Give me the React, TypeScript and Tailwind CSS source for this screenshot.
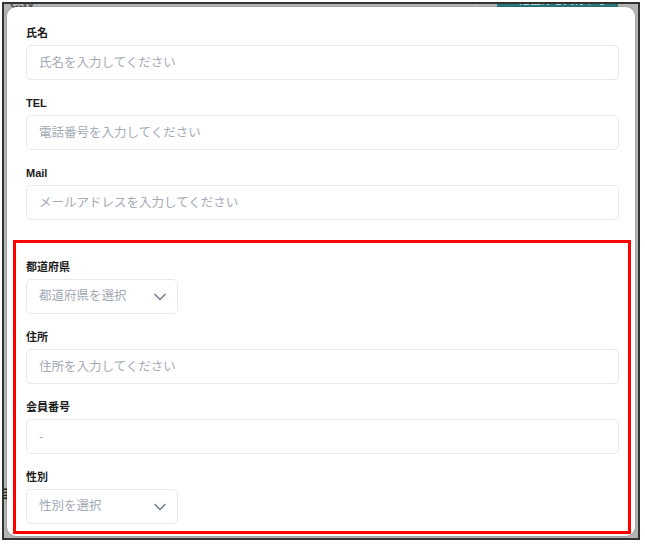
import React from "react";
import { ChevronDown } from "lucide-react";

const font = {
  fontFamily: '"Liberation Sans", "Noto Sans CJK JP", sans-serif',
};

function Label({ children }: { children: React.ReactNode }) {
  return (
    <label className="block text-[11px] leading-[16px] font-bold text-[#1c1c1c] mb-1">
      {children}
    </label>
  );
}

function TextField({
  label,
  placeholder,
  className = "",
}: {
  label: string;
  placeholder: string;
  className?: string;
}) {
  return (
    <div className={className}>
      <Label>{label}</Label>
      <input
        type="text"
        placeholder={placeholder}
        className="block w-full h-[35px] px-3 rounded-[5px] border border-[#e7e8eb] bg-white text-[12.5px] text-[#333] placeholder:text-[#a3aab6] outline-none"
      />
    </div>
  );
}

function SelectField({
  label,
  placeholder,
  className = "",
}: {
  label: string;
  placeholder: string;
  className?: string;
}) {
  return (
    <div className={className}>
      <Label>{label}</Label>
      <div className="flex items-center justify-between w-[152px] h-[35px] pl-3 pr-[7px] rounded-[5px] border border-[#e7e8eb] bg-white">
        <span className="text-[12.5px] text-[#a3aab6]">{placeholder}</span>
        <ChevronDown size={20} strokeWidth={2} className="text-[#7b8391]" />
      </div>
    </div>
  );
}

export default function App() {
  return (
    <div className="w-[645px] h-[544px] bg-white pt-[2px] pl-[2px]" style={font}>
      <div className="relative flex flex-col w-[638px] h-[538px] border-2 border-[#333] bg-[#b5b5b5] overflow-hidden">
        {/* backdrop page behind the modal */}
        <div className="absolute left-[6px] -top-[9px] text-[12px] font-bold text-[#555]">
          CSV
        </div>
        <div className="absolute left-[472px] top-0 h-[6px] w-px bg-[#c4c4c4]" />
        <div className="absolute left-[493px] -top-[10px] w-[121px] h-[17px] bg-[#2a7b7c] flex items-start justify-center">
          <span className="text-[11px] text-[#d6e6e6] leading-[13px]">
            一括登録を実行する
          </span>
        </div>
        <div className="absolute -left-[6px] top-[482px] text-[12px] font-bold text-[#222]">
          目
        </div>

        <div className="relative z-10 flex-1 mt-[3px] ml-[3px] mr-[3px] mb-[2px] bg-white rounded-[9px] shadow-[0_0_2px_rgba(0,0,0,0.35)] overflow-hidden pt-[18px] pl-[19px] pr-[16px]">
          <TextField label="氏名" placeholder="氏名を入力してください" className="mb-[15px]" />
          <TextField label="TEL" placeholder="電話番号を入力してください" className="mb-[15px]" />
          <TextField label="Mail" placeholder="メールアドレスを入力してください" />

          <div className="mt-[20px] -ml-[13px] -mr-[12px] border-[3px] border-[#ff0000] pt-[16px] pb-[7px] pl-[10px] pr-[9px]">
            <SelectField label="都道府県" placeholder="都道府県を選択" className="mb-[15px]" />
            <TextField label="住所" placeholder="住所を入力してください" className="mb-[15px]" />
            <TextField label="会員番号" placeholder="-" className="mb-[15px]" />
            <SelectField label="性別" placeholder="性別を選択" />
          </div>
        </div>
      </div>
    </div>
  );
}
